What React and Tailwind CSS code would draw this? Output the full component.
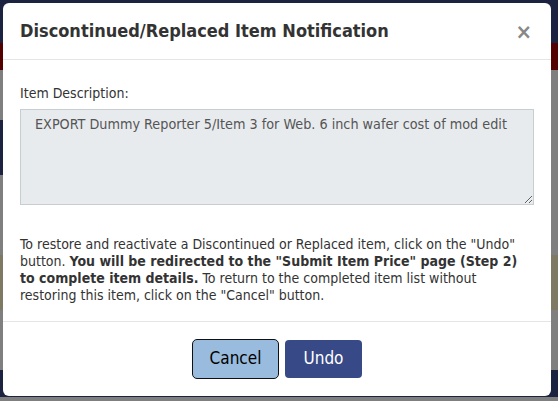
import React from 'react';

const FONT = { fontFamily: '"DejaVu Sans Condensed", "DejaVu Sans", sans-serif' };

const Backdrop = () => (
  <div className="flex flex-col h-[401px]">
    <div className="h-[43px] bg-[#1c2340]" />
    <div className="h-[27px] bg-[#520000]" />
    <div className="h-[50px] bg-[#7f7f7f]" />
    <div className="h-[55px] bg-[#7f7f7f] border-l-[3px] border-[#1c2340]" />
    <div className="h-[80px] bg-[#7f7f7f]" />
    <div className="h-[55px] bg-[#7d7963]" />
    <div className="h-[60px] bg-[#7f7f7f]" />
    <div className="h-[27px] bg-[#1c2340]" />
    <div className="flex-1 bg-[#7f7f7f]" />
  </div>
);

export default function App() {
  return (
    <div className="relative w-[558px] h-[401px] overflow-hidden" style={FONT}>
      <Backdrop />

      {/* Modal */}
      <div className="absolute left-[3px] top-[3px] w-[548px] h-[393px] bg-white rounded-[6px] flex flex-col">
        <div className="flex justify-between items-center px-[17px] pt-[16px] pb-[16px] border-b border-[#e5e5e5]">
          <h4 className="text-[18px] leading-[24px] font-bold text-[#333]">Discontinued/Replaced Item Notification</h4>
          <button className="text-[#888] text-[22px] leading-[22px] font-bold mr-[2px] mt-[2px]">×</button>
        </div>

        <div className="px-[17px] pt-[25px] pb-[17px] text-[14px] text-[#333]">
          <label className="block leading-[17px] mb-[7px]">Item Description:</label>
          <textarea
            readOnly
            defaultValue="EXPORT Dummy Reporter 5/Item 3 for Web. 6 inch wafer cost of mod edit"
            className="block w-[514px] h-[96px] bg-[#e8ebee] border border-[#c8cdd2] text-[#555] text-[14.25px] leading-[20px] pl-[14px] pt-[4px] outline-none"
          />
          <div className="mt-[31px] leading-[17px] whitespace-nowrap">
            <div>To restore and reactivate a Discontinued or Replaced item, click on the "Undo"</div>
            <div>button. <b>You will be redirected to the "Submit Item Price" page (Step 2)</b></div>
            <div><b>to complete item details.</b> To return to the completed item list without</div>
            <div>restoring this item, click on the "Cancel" button.</div>
          </div>
        </div>

        <div className="flex-1 border-t border-[#e5e5e5] flex justify-center items-start pt-[17px] gap-[6px]">
          <button className="w-[87px] h-[40px] bg-[#99bbdd] border border-[#111] rounded-[5px] text-[17px] text-black">
            Cancel
          </button>
          <button className="w-[77px] h-[38px] mt-[1px] bg-[#384987] rounded-[4px] text-[17px] text-white">
            Undo
          </button>
        </div>
      </div>
    </div>
  );
}
